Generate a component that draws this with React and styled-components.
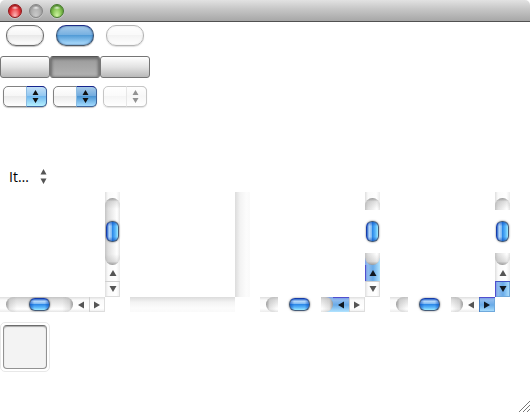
import React from "react";
import styled, { createGlobalStyle, css } from "styled-components";

const GlobalStyle = createGlobalStyle`
  *, *::before, *::after { box-sizing: border-box; }
  body { margin: 0; background: #fff; font-family: "Open Sans", "Noto Sans", sans-serif; }
  button, select { margin: 0; padding: 0; font: inherit; appearance: none; outline: none; }
`;

const Window = styled.main`
  display: flex;
  flex-direction: column;
  min-height: 100vh;
`;

const TitleBar = styled.header`
  display: flex;
  align-items: center;
  gap: 7px;
  height: 22px;
  padding: 0 8px;
  border-bottom: 1px solid #515151;
  border-radius: 5px 5px 0 0;
  background: linear-gradient(#e2e2e2, #c8c8c8 40%, #a7a7a7);
`;

const lights = {
  red: ["#8f1518", "#e8383c", "#ffc0c0"],
  gray: ["#858585", "#b0b0b0", "#cccccc"],
  green: ["#45792c", "#7fbf4c", "#d4f8a8"],
};

const Light = styled.button`
  width: 14px;
  height: 14px;
  border: 1px solid ${(p) => lights[p.$tone][0]};
  border-radius: 50%;
  background:
    radial-gradient(ellipse 4px 2px at 50% 22%, rgba(255, 255, 255, 0.8), transparent),
    radial-gradient(ellipse at 50% 95%, ${(p) => lights[p.$tone][2]}, ${(p) => lights[p.$tone][1]} 60%);
  box-shadow: 0 1px 0 rgba(255, 255, 255, 0.3), inset 0 1px 2px ${(p) => lights[p.$tone][0]};
`;

const PushRow = styled.div`
  display: flex;
  gap: 12px;
  height: 34px;
  padding: 3px 6px 0;
`;

const PushButton = styled.button`
  width: 38px;
  height: 21px;
  border: 1px solid #6c6c6c;
  border-radius: 10px;
  background: linear-gradient(#fff, #f6f6f6 45%, #e9e9e9 50%, #fff);
  box-shadow: 0 1px 1px rgba(0, 0, 0, 0.25), inset 0 0 2px rgba(0, 0, 0, 0.2);
  ${(p) => p.$pressed && css`
    border-color: #1d2c85 #3d5674 #4c5a68;
    background: linear-gradient(#a8cbea, #78b1e1 45%, #539cd7 50%, #b4e1ff);
    box-shadow: 0 1px 1px rgba(0, 0, 0, 0.25), inset 0 0 2px #174a8a;
  `}
  &:disabled { opacity: 0.5; }
`;

const SegmentRow = styled.div`
  display: flex;
  height: 30px;
`;

const Segment = styled.button`
  width: 50px;
  height: 22px;
  border: 1px solid #757575;
  border-radius: 3px;
  background: linear-gradient(#fff, #e2e2e2 50%, #b9b9b9);
  ${(p) => p.$pressed && css`
    border-color: #555 #777 #6b6b6b;
    background: linear-gradient(#9a9a9a, #b3b3b3);
    box-shadow: inset 0 1px 3px 1px #6a6a6a;
  `}
`;

const PopupRow = styled.div`
  display: flex;
  gap: 6px;
  height: 78px;
  padding: 0 3px;
`;

const PopupFrame = styled.span`
  position: relative;
  width: 44px;
  height: 21px;
  opacity: ${(p) => (p.$dim ? 0.45 : 1)};
`;

const faces = {
  active: "linear-gradient(#c3dff7, #92c8f1 48%, #73b8ee 50%, #b6f1ff)",
  pressed: "linear-gradient(#a6c9e8, #70abdf 48%, #4d96d3 50%, #a4dcff)",
  off: "linear-gradient(#fff, #eee 50%, #fff)",
};

const PopupSelect = styled.select`
  display: block;
  width: 44px;
  height: 21px;
  border: 1px solid #828282;
  border-radius: 5px;
  background: linear-gradient(#fff, #f6f6f6 48%, #ebebeb 50%, #fff);
  box-shadow: 0 1px 1px rgba(0, 0, 0, 0.25);
  &:disabled { opacity: 1; }
`;

const PopupCap = styled.span`
  position: absolute;
  top: 0;
  right: 0;
  bottom: 0;
  display: flex;
  align-items: center;
  justify-content: center;
  width: 21px;
  padding-right: 2px;
  border: 1px solid ${(p) => (p.$face === "off" ? "#828282" : "#3e659c")};
  border-top-color: ${(p) => (p.$face === "off" ? "#828282" : "#15248d")};
  border-left: 1px solid ${(p) => (p.$face === "off" ? "#ccc" : "#8abbe2")};
  border-radius: 0 5px 5px 0;
  background: ${(p) => faces[p.$face]};
  pointer-events: none;
`;

const InlinePopup = styled.span`
  display: flex;
  align-items: center;
  gap: 7px;
  height: 28px;
  padding: 0 0 3px 9px;
`;

const InlineSelect = styled.select`
  width: 24px;
  height: 20px;
  border: 0;
  background: transparent;
  color: #000;
  font-size: 14px;
`;

const Panes = styled.div`
  display: flex;
  gap: 10px;
`;

const Pane = styled.section`
  display: grid;
  grid-template-columns: 105px 15px;
  grid-template-rows: 105px 15px;
`;

const Bar = styled.div`
  display: flex;
  flex-direction: ${(p) => (p.$v ? "column" : "row")};
  grid-area: ${(p) => (p.$v ? "1 / 2" : "2 / 1")};
`;

const EmptyBar = styled(Bar)`
  background: linear-gradient(${(p) => (p.$v ? "to right" : "to bottom")}, #dcdcdc, #f3f3f3 35%, #fcfcfc 75%, #fafafa);
`;

const grooveFill = (p) => `linear-gradient(${p.$v ? "to right" : "to bottom"}, #c4c4c4, #dedede 20%, #f4f4f4 60%, #fff 80%, #e4e4e4)`;
const plainFill = (p) => `linear-gradient(${p.$v ? "to right" : "to bottom"}, #dedede, #fafafa 20%, #fff 75%, #ececec)`;
const blueFill = (p) => `linear-gradient(${p.$v ? "to right" : "to bottom"}, #7d9de8, #8fbced 15%, #69abe8 50%, #b2e4ff)`;

const StartPiece = styled.div`
  flex: 0 0 18px;
  display: flex;
  padding: ${(p) => (p.$v ? "6px 0 0" : "0 0 0 6px")};
  background: ${plainFill};
`;

const EndPiece = styled.div`
  flex: 0 0 12px;
  display: flex;
  background: ${(p) => (p.$blue ? blueFill : plainFill)};
`;

const GrooveEnd = styled.div`
  flex: 1;
  border-radius: ${(p) => (p.$end ? (p.$v ? "0 0 8px 8px" : "0 8px 8px 0") : (p.$v ? "8px 8px 0 0" : "8px 0 0 8px"))};
  background:
    linear-gradient(${(p) => (p.$end ? (p.$v ? "to top" : "to left") : (p.$v ? "to bottom" : "to right"))}, rgba(110, 110, 110, 0.65), rgba(150, 150, 150, 0.25) 30%, transparent 90%),
    ${grooveFill};
`;

const Middle = styled.div`
  flex: 1;
  display: flex;
  align-items: center;
  justify-content: center;
  background: ${(p) => (p.$filled ? grooveFill(p) : "none")};
`;

const Thumb = styled.span`
  width: ${(p) => (p.$v ? 13 : 21)}px;
  height: ${(p) => (p.$v ? 21 : 13)}px;
  border: 1px solid #465c78;
  ${(p) => (p.$v ? "border-left-color: #173caa;" : "border-top-color: #173caa;")}
  border-radius: 6px;
  background:
    linear-gradient(${(p) => (p.$v ? "to bottom" : "to right")}, rgba(10, 75, 190, 0.6), transparent 22%, transparent 78%, rgba(10, 75, 190, 0.6)),
    linear-gradient(${(p) => (p.$v ? "to right" : "to bottom")}, #2460c8, #b9dafa 20%, #7db8f3 44%, #2e8ae8 50%, #58b4fa 75%, #9ceaff);
  box-shadow: 0 0 2px rgba(0, 0, 0, 0.55);
`;

const Stepper = styled.button`
  flex: 0 0 16px;
  display: flex;
  align-items: center;
  justify-content: center;
  border: 0;
  background: ${(p) => (p.$blue ? blueFill : plainFill)};
  ${(p) => p.$last && (p.$v
    ? `box-shadow: inset 0 1px 0 ${p.$blue ? "#4254c5" : "#d0d0d0"}, inset -1px -1px 0 ${p.$blue ? "#6fa9dc" : "#ddd"};`
    : `box-shadow: inset 1px 0 0 ${p.$blue ? "#4b83c5" : "#d0d0d0"}, inset -1px -1px 0 ${p.$blue ? "#6fa9dc" : "#ddd"};`)}
  ${(p) => p.$blue && (p.$v ? "border-left: 1px solid #514fcf;" : "border-top: 1px solid #514fcf;")}
`;

const TileArea = styled.div`
  flex: 1;
  padding-top: 10px;
`;

const TileFrame = styled.div`
  width: 50px;
  height: 50px;
  padding: 2px;
  border: 1px solid #e8e8e8;
  border-radius: 5px;
`;

const Tile = styled.button`
  display: block;
  width: 44px;
  height: 44px;
  border: 1px solid #929292;
  border-top-color: #6c6c6c;
  border-radius: 4px;
  background: #f3f3f3;
  box-shadow: inset 0 1px 1px #aaa;
`;

const Footer = styled.footer`
  display: flex;
  justify-content: flex-end;
`;

const Grip = styled.svg`
  display: block;
  width: 12px;
  height: 12px;
`;

function UpDown({ color = "#111", tall }) {
  return (
    <svg width="7" height={tall ? 15 : 13} viewBox={tall ? "0 0 7 15" : "0 0 7 13"} aria-hidden="true" fill={color}>
      <path d={tall ? "M3.5 0L6.5 5.5H0.5zM3.5 15L6.5 9.5H0.5z" : "M3.5 0L6.5 5H0.5zM3.5 13L6.5 8H0.5z"} />
    </svg>
  );
}

const arrowPaths = {
  up: "M4 1L7.5 7H0.5z",
  down: "M4 7L7.5 1H0.5z",
  left: "M1 4L7 0.5V7.5z",
  right: "M7 4L1 0.5V7.5z",
};

function Arrow({ dir, dark }) {
  return (
    <svg width="8" height="8" viewBox="0 0 8 8" aria-hidden="true">
      <path d={arrowPaths[dir]} fill={dark ? "#101820" : "#555"} />
    </svg>
  );
}

function Popup({ face, disabled, label }) {
  return (
    <PopupFrame $dim={disabled}>
      <PopupSelect aria-label={label} disabled={disabled}><option value="" aria-label="None" /></PopupSelect>
      <PopupCap $face={face}><UpDown /></PopupCap>
    </PopupFrame>
  );
}

function ScrollBar({ v, full, active }) {
  const back = active === "back";
  const forward = active === "forward";
  return (
    <Bar $v={v} role="scrollbar" aria-orientation={v ? "vertical" : "horizontal"} aria-valuenow={50}>
      <StartPiece $v={v}><GrooveEnd $v={v} /></StartPiece>
      <Middle $v={v} $filled={full}><Thumb $v={v} /></Middle>
      <EndPiece $v={v} $blue={back}><GrooveEnd $v={v} $end /></EndPiece>
      <Stepper $v={v} $blue={back} aria-label={v ? "Scroll up" : "Scroll left"}>
        <Arrow dir={v ? "up" : "left"} dark={back} />
      </Stepper>
      <Stepper $v={v} $last $blue={forward} aria-label={v ? "Scroll down" : "Scroll right"}>
        <Arrow dir={v ? "down" : "right"} dark={forward} />
      </Stepper>
    </Bar>
  );
}

function ScrollPane(props) {
  return (
    <Pane>
      <ScrollBar v {...props} />
      <ScrollBar {...props} />
    </Pane>
  );
}

export default function App() {
  return (
    <>
      <GlobalStyle />
      <Window>
        <TitleBar>
          <Light $tone="red" aria-label="Close" />
          <Light $tone="gray" aria-label="Minimize" />
          <Light $tone="green" aria-label="Zoom" />
        </TitleBar>
        <PushRow>
          <PushButton aria-label="Normal button" />
          <PushButton $pressed aria-label="Pressed button" />
          <PushButton disabled aria-label="Disabled button" />
        </PushRow>
        <SegmentRow>
          <Segment aria-label="First segment" />
          <Segment $pressed aria-label="Second segment" aria-pressed="true" />
          <Segment aria-label="Third segment" />
        </SegmentRow>
        <PopupRow>
          <Popup face="active" label="Normal popup" />
          <Popup face="pressed" label="Pressed popup" />
          <Popup face="off" disabled label="Disabled popup" />
        </PopupRow>
        <InlinePopup>
          <InlineSelect aria-label="Item"><option>It…</option></InlineSelect>
          <UpDown color="#555" tall />
        </InlinePopup>
        <Panes>
          <ScrollPane full />
          <Pane><EmptyBar $v /><EmptyBar /></Pane>
          <ScrollPane active="back" />
          <ScrollPane active="forward" />
        </Panes>
        <TileArea>
          <TileFrame><Tile aria-label="Square button" /></TileFrame>
        </TileArea>
        <Footer>
          <Grip viewBox="0 0 12 12" aria-hidden="true">
            <path d="M1 12L12 1M5 12L12 5M9 12L12 9" stroke="#777" fill="none" />
          </Grip>
        </Footer>
      </Window>
    </>
  );
}
